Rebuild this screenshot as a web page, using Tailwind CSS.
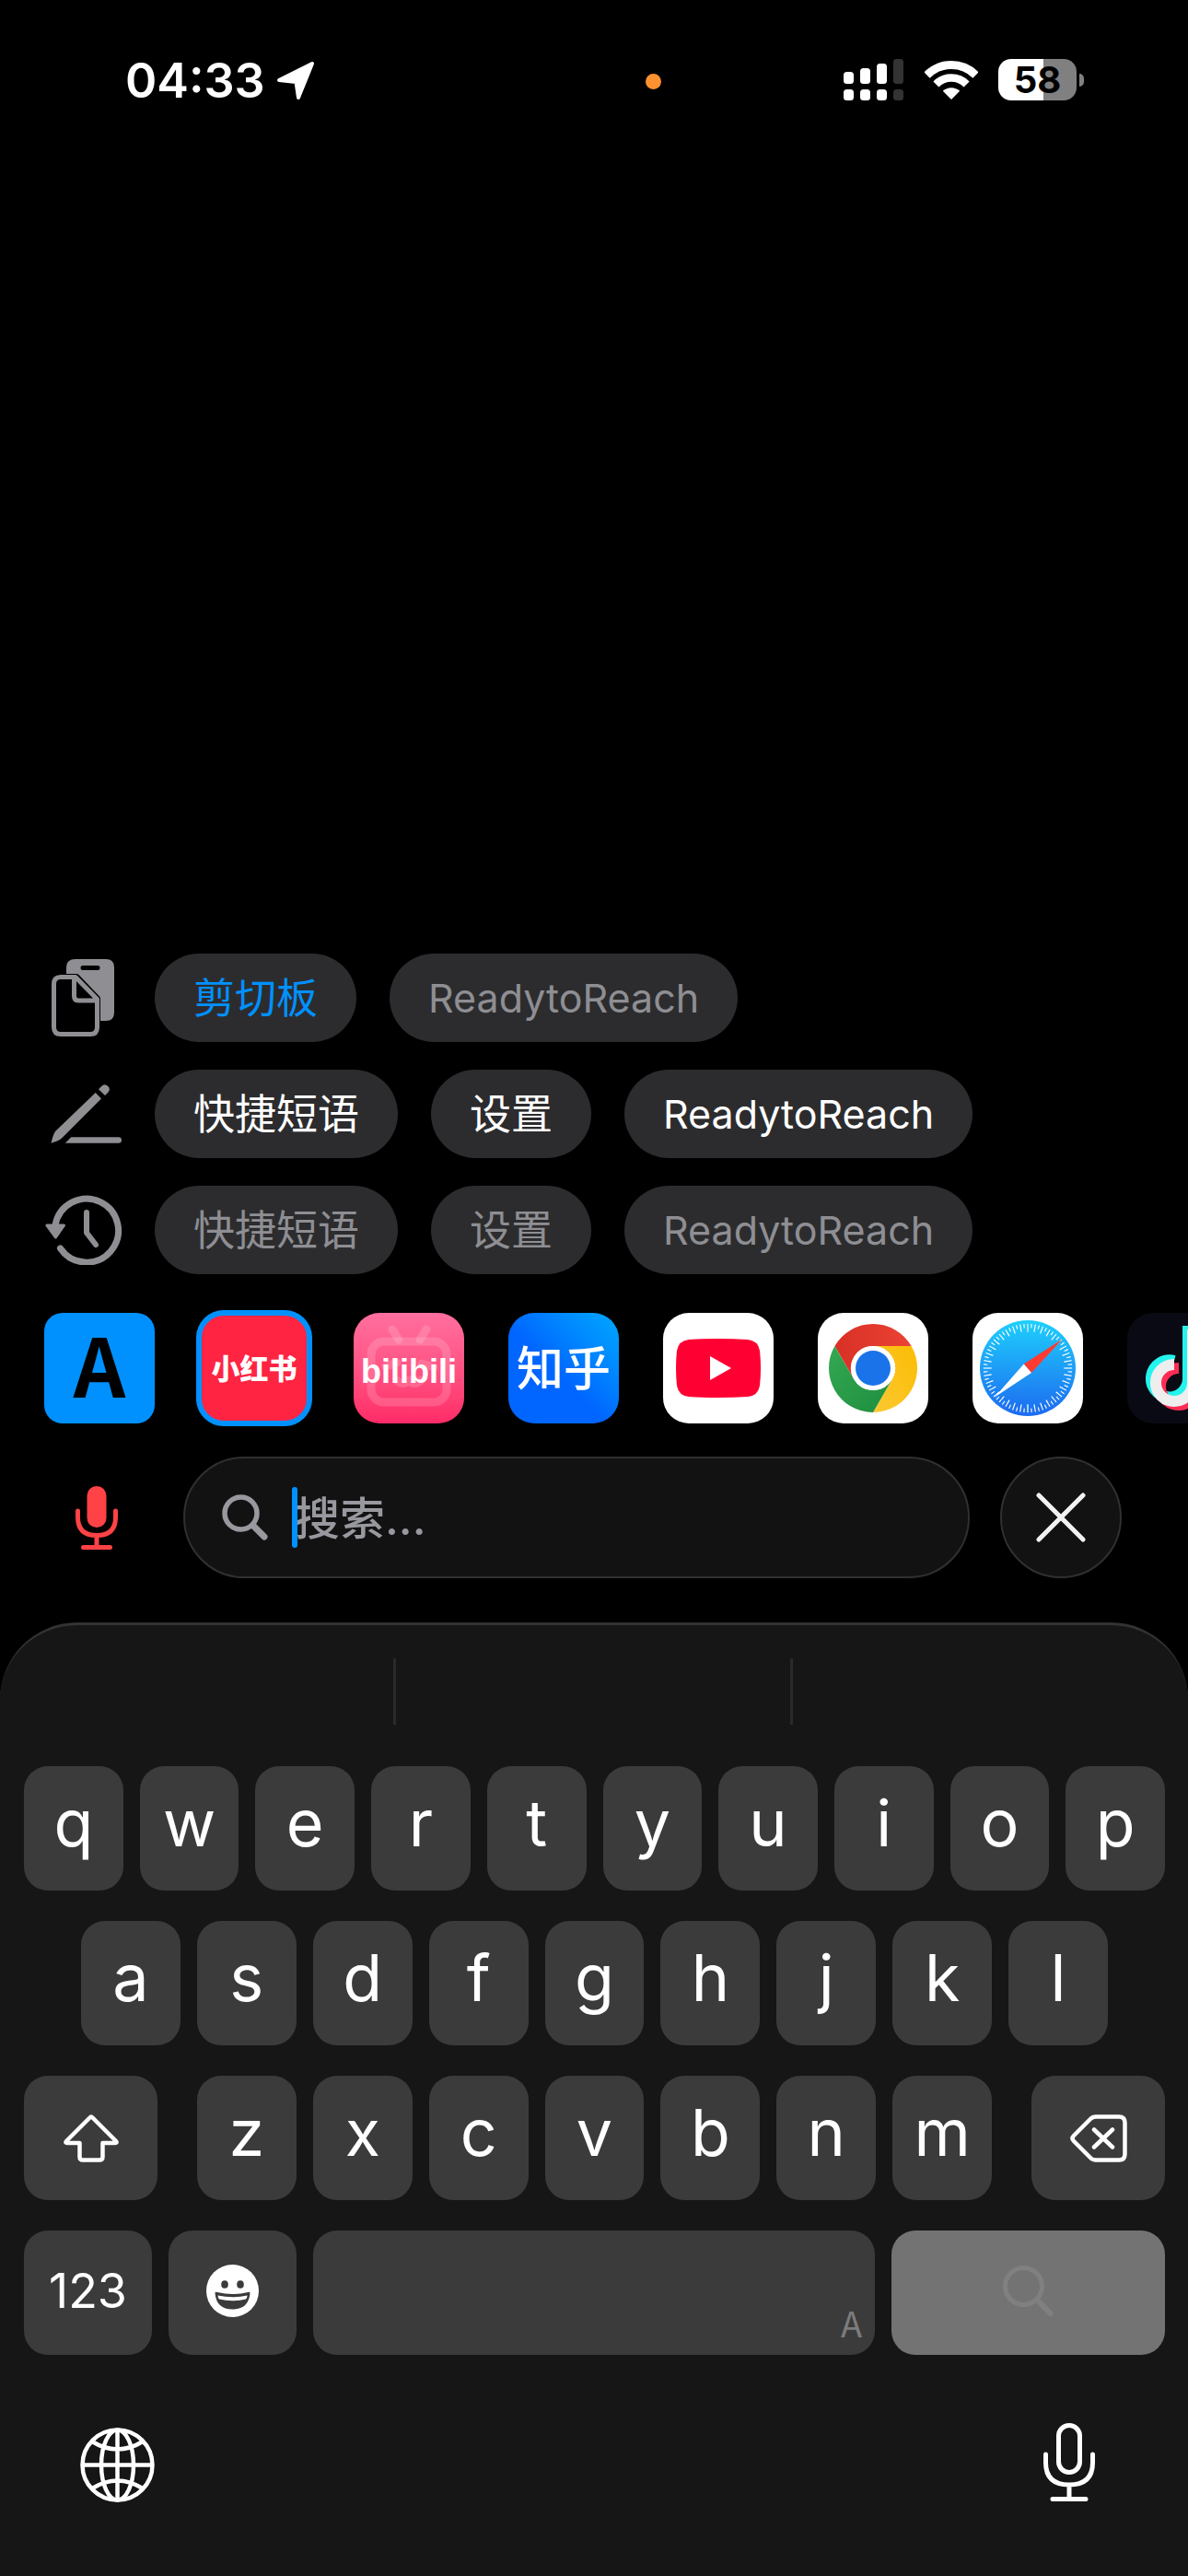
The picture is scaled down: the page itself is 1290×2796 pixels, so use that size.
<!DOCTYPE html>
<html lang="zh-CN">
<head>
<meta charset="utf-8">
<meta name="viewport" content="width=device-width, initial-scale=1">
<title>搜索</title>
<script src="https://cdn.jsdelivr.net/npm/@tailwindcss/browser@4"></script>
</head>
<body class="bg-black text-white font-['Inter','Noto_Sans_CJK_SC',sans-serif]">
<div class="flex min-h-screen flex-col overflow-hidden">

  <!-- Status bar -->
  <header class="flex items-center pt-16 pr-[113px] pl-[136px]">
    <time class="pt-[2px] text-[52px] leading-[41px] font-semibold">04:33</time>
    <svg class="mt-[2px] ml-3 h-[43px] w-[43px]" viewBox="0 0 43 43" fill="#fff" stroke="#fff" stroke-width="4" stroke-linejoin="round"><path d="M3 21 39 3 24 40 21.500 23Z"/></svg>
    <span class="mt-1 mr-[198px] ml-auto size-[17px] rounded-full bg-[#ff9230]"></span>
    <div class="flex items-center">
      <svg class="h-[45px] w-[65px]" viewBox="0 0 65 45" fill="#fff">
        <rect x="0" y="14" width="11" height="13" rx="3.500"/><rect x="18" y="10" width="11" height="17" rx="3.500"/><rect x="36" y="5" width="11" height="22" rx="3.500"/><rect x="54" y="0" width="11" height="27" rx="3.500" fill="#333"/>
        <rect x="0" y="33" width="11" height="12" rx="3.500"/><rect x="18" y="33" width="11" height="12" rx="3.500"/><rect x="36" y="33" width="11" height="12" rx="3.500"/><rect x="54" y="33" width="11" height="12" rx="3.500" fill="#333"/>
      </svg>
      <svg class="ml-[23px] h-[42px] w-[58px]" viewBox="0 0 58 42" fill="none" stroke="#fff"><path stroke-width="9" d="M2.500 15.500A37.500 37.500 0 0 1 55.500 15.500"/><path stroke-width="8.500" d="M12.400 25.400A23.500 23.500 0 0 1 45.600 25.400"/><path fill="#fff" stroke="none" d="M29 42 19.800 32.800A13.700 13.700 0 0 1 38.200 32.800Z"/></svg>
      <div class="ml-[22px] flex h-[45px] w-[85px] items-center justify-center rounded-[14px] bg-linear-to-r from-white from-58% to-[#808080] to-58% text-[40px] leading-none font-bold text-black">58</div>
      <span class="ml-[3px] h-[14px] w-[5px] rounded-r-full bg-[#808080]"></span>
    </div>
  </header>

  <main class="mt-auto flex flex-col">
    <!-- Quick phrase rows -->
    <section class="flex flex-col gap-[30px] text-[45px] leading-none">
      <div class="flex items-center gap-9">
        <div class="flex w-[132px] justify-end pr-2">
          <svg class="h-[84px] w-[68px]" viewBox="0 0 68 84"><path fill="#8e8e93" fill-rule="evenodd" d="M26 0H59Q68 0 68 9V58Q68 67 59 67H25Q16 67 16 58V9Q16 0 26 0ZM34 7Q31.500 7 31.500 9.500T34 12H50Q52.500 12 52.500 9.500T50 7Z"/><g stroke-linejoin="round"><path fill="#000" stroke="#000" stroke-width="7" d="M27 19.500H10Q2.500 19.500 2.500 27V74Q2.500 81.500 10 81.500H42Q49.500 81.500 49.500 74V43Z"/><path fill="none" stroke="#8e8e93" stroke-width="5" d="M26 19.500H10Q2.500 19.500 2.500 27V74Q2.500 81.500 10 81.500H42Q49.500 81.500 49.500 74V43.500ZM24.500 20V40Q24.500 45 29 45H49"/></g></svg>
        </div>
        <button class="h-24 rounded-full bg-[#2c2c2e] px-[42px] text-[#0091ff]">剪切板</button>
        <button class="h-24 rounded-full bg-[#2c2c2e] px-[42px] text-[43px] text-[#8e8e93]">ReadytoReach</button>
      </div>
      <div class="flex items-center gap-9">
        <div class="flex w-[132px] justify-end">
          <svg class="h-[64px] w-[77px]" viewBox="0 0 77 64" fill="#8e8e93"><path d="M.5 63.700 2 58Q3 54 5 51L48.700 9 55 15.500 13 57.500Q10.500 60 7 61.500ZM52 5.300 55.500 1.800Q58.500-1.500 62 1.800T62.500 8.500L59 12ZM15.800 63.700 22.300 57.300H73.500Q77 57.300 77 60.500T73.500 63.700Z"/></svg>
        </div>
        <button class="h-24 rounded-full bg-[#2c2c2e] px-[42px]">快捷短语</button>
        <button class="h-24 rounded-full bg-[#2c2c2e] px-[42px]">设置</button>
        <button class="h-24 rounded-full bg-[#2c2c2e] px-[42px] text-[43px]">ReadytoReach</button>
      </div>
      <div class="flex items-center gap-9 text-[#8e8e93]">
        <div class="flex w-[132px] justify-end">
          <svg class="h-[76px] w-[83px]" viewBox="0 0 83 76" fill="none" stroke="#8e8e93" stroke-width="7" stroke-linecap="round" stroke-linejoin="round"><path d="M11 33A34.500 34.500 0 1 1 16.500 58"/><path stroke-width="6" d="M45 19V41L55 54"/><path fill="#8e8e93" stroke-width="3" d="M2 33H20.500L11.500 46Z"/></svg>
        </div>
        <button class="h-24 rounded-full bg-[#2c2c2e] px-[42px]">快捷短语</button>
        <button class="h-24 rounded-full bg-[#2c2c2e] px-[42px]">设置</button>
        <button class="h-24 rounded-full bg-[#2c2c2e] px-[42px] text-[43px]">ReadytoReach</button>
      </div>
    </section>

    <!-- Search engines -->
    <nav class="mt-[42px] flex h-[120px] items-center gap-12 overflow-visible pl-12 leading-none whitespace-nowrap">
      <a href="#" class="flex size-[120px] shrink-0 items-center justify-center rounded-[20px] bg-[#0091ff] pb-3 font-['Noto_Sans_CJK_SC',sans-serif] text-[88px] font-bold text-black">A</a>
      <a href="#" class="-m-[3px] flex size-[126px] shrink-0 items-center justify-center rounded-[30px] border-6 border-[#0091ff] bg-[#ff2442] text-[31px] font-black">小红书</a>
      <a href="#" aria-label="bilibili" class="grid size-[120px] shrink-0 place-items-center overflow-hidden rounded-[28px] bg-linear-to-b from-[#ff6f9f] to-[#ff2a68]">
        <svg class="size-[120px]" viewBox="0 0 120 120"><g fill="none" stroke="#fff" stroke-opacity=".16" stroke-width="9" stroke-linecap="round" stroke-linejoin="round"><path d="M42 18 49 29M79 18 72 29"/><rect x="19" y="31" width="82" height="66" rx="14"/><path d="M35 58 47 54M74 55 87 59M47 73Q54 80 60 73 66 80 73 73"/></g><text x="60" y="76" text-anchor="middle" fill="#fff" font-family="Liberation Sans, sans-serif" font-size="36" font-weight="700">bilibili</text></svg>
      </a>
      <a href="#" class="flex size-[120px] shrink-0 items-center justify-center rounded-[28px] bg-linear-to-tr from-[#0066ff] from-45% to-[#00a8ff] text-[51px] font-medium">知乎</a>
      <a href="#" aria-label="YouTube" class="size-[120px] shrink-0 rounded-[28px] bg-white">
        <svg class="size-[120px]" viewBox="0 0 120 120"><path fill="#f03" d="M28 29Q60 27 92 29 103 30 105 41 107 60 105 79 103 90 92 91 60 93 28 91 17 90 15 79 13 60 15 41 17 30 28 29Z"/><path fill="#fff" d="M51 47 74 60 51 73Z"/></svg>
      </a>
      <a href="#" aria-label="Chrome" class="size-[120px] shrink-0 rounded-[28px] bg-white">
        <svg class="size-[120px]" viewBox="0 0 120 120">
          <defs><linearGradient id="cr"><stop stop-color="#d93025"/><stop offset="1" stop-color="#ea4335"/></linearGradient><linearGradient id="cy" x1="0" y1="1" x2="1" y2="0"><stop stop-color="#fcc934"/><stop offset="1" stop-color="#fbbc04"/></linearGradient><linearGradient id="cg" x1="1" y1="1" x2="0" y2="0"><stop stop-color="#1e8e3e"/><stop offset="1" stop-color="#34a853"/></linearGradient></defs>
          <path fill="url(#cr)" d="M18.430 36A48 48 0 0 1 101.570 36H60A24 24 0 0 0 39.200 72Z"/><path fill="url(#cy)" d="M101.570 36A48 48 0 0 1 60 108L80.800 72A24 24 0 0 0 60 36Z"/><path fill="url(#cg)" d="M60 108A48 48 0 0 1 18.430 36L39.200 72A24 24 0 0 0 80.800 72Z"/><circle cx="60" cy="60" r="24" fill="#fff"/><circle cx="60" cy="60" r="19" fill="#1a73e8"/></svg>
      </a>
      <a href="#" aria-label="Safari" class="size-[120px] shrink-0 rounded-[28px] bg-white">
        <svg class="size-[120px]" viewBox="0 0 120 120">
          <defs><linearGradient id="sf" x2="0" y2="1"><stop stop-color="#1ed0fc"/><stop offset="1" stop-color="#1d6af0"/></linearGradient></defs>
          <circle cx="60" cy="60" r="52" fill="url(#sf)"/>
          <g fill="none" stroke="#fff"><circle cx="60" cy="60" r="46" stroke-width="4.500" pathLength="72" stroke-dasharray=".28 .72" stroke-dashoffset=".14"/><circle cx="60" cy="60" r="42" stroke-width="4" pathLength="36" stroke-dasharray=".16 .84" stroke-dashoffset=".08"/></g>
          <path fill="#9edcff" fill-opacity=".75" d="M59 12h2v9h-2zM59 99h2v9h-2zM12 59v2h9v-2zM99 59v2h9v-2z"/>
          <path fill="#ff3b30" d="M97.500 28.500 55.700 55.500 64 65Z"/><path fill="#fff" d="M24 91.500 55.700 55.500 64 65Z"/></svg>
      </a>
      <a href="#" aria-label="抖音" class="size-[120px] shrink-0 rounded-[28px] bg-[#0a0a14]">
        <svg class="size-[120px]" viewBox="0 0 120 120" fill="none" stroke-width="12"><path stroke="#25f4ee" d="M51 52A20 20 0 1 0 66 72V14"/><path stroke="#fe2c55" d="M56 60A20 20 0 1 0 76 80V22Q80 38 96 40"/><path stroke="#eee" d="M51 56A20 20 0 1 0 71 76V18Q75 34 92 36"/></svg>
      </a>
    </nav>

    <!-- Search field -->
    <form class="mt-9 flex items-center pr-[72px] pl-[82px]">
      <button type="button" aria-label="语音" class="mr-[71px]">
        <svg class="h-[69px] w-[46px]" viewBox="0 0 46 69" fill="none" stroke="#ff4245" stroke-width="5" stroke-linecap="round"><rect x="12.500" y="0" width="21" height="45" rx="10.500" fill="#ff4245" stroke="none"/><path d="M2.500 27V34Q2.500 53.500 23 53.500T43.500 34V27M23 54V66M8.500 66.500H37.500"/></svg>
      </button>
      <label class="relative flex h-[132px] min-w-0 flex-1 items-center rounded-full border-2 border-[#303030] bg-[#121212] pl-10">
        <svg class="h-[50px] w-[50px] shrink-0" viewBox="0 0 50 50" fill="none" stroke="#98989f" stroke-linecap="round"><circle cx="20.500" cy="20.500" r="17.500" stroke-width="5.500"/><path stroke-width="7" d="M34 34 46 46"/></svg>
        <input type="text" aria-label="搜索" placeholder="搜索..." class="ml-[29px] min-w-0 flex-1 bg-transparent pt-1 text-[49px] leading-[66px] font-medium outline-none placeholder:text-[#98989f]">
        <span class="absolute left-[116px] h-[66px] w-[6px] rounded-full bg-[#0091ff]"></span>
      </label>
      <button type="button" aria-label="关闭" class="ml-[33px] flex size-[132px] items-center justify-center rounded-full border-2 border-[#303030] bg-[#121212]">
        <svg class="size-[54px]" viewBox="0 0 54 54" stroke="#f2f2f2" stroke-width="5" stroke-linecap="round"><path d="M3 3 51 51M51 3 3 51"/></svg>
      </button>
    </form>

    <!-- Keyboard -->
    <section class="mt-12 rounded-t-[84px] border-t-3 border-[#333] bg-[#161616] pr-[25px] pl-[26px] text-[70px] leading-none">
      <div class="grid grid-cols-3 pt-9 pb-[45px]">
        <span class="h-[72px]"></span>
        <span class="-mr-[9px] -ml-3 h-[72px] border-x-3 border-[#2a2a2a]"></span>
        <span class="h-[72px]"></span>
      </div>
      <div class="flex flex-col gap-[33px]">
        <div class="flex gap-[18px]">
          <button class="h-[135px] flex-1 rounded-[26px] bg-[#3b3b3b] pb-3">q</button>
          <button class="h-[135px] flex-1 rounded-[26px] bg-[#3b3b3b] pb-3">w</button>
          <button class="h-[135px] flex-1 rounded-[26px] bg-[#3b3b3b] pb-3">e</button>
          <button class="h-[135px] flex-1 rounded-[26px] bg-[#3b3b3b] pb-3">r</button>
          <button class="h-[135px] flex-1 rounded-[26px] bg-[#3b3b3b] pb-3">t</button>
          <button class="h-[135px] flex-1 rounded-[26px] bg-[#3b3b3b] pb-3">y</button>
          <button class="h-[135px] flex-1 rounded-[26px] bg-[#3b3b3b] pb-3">u</button>
          <button class="h-[135px] flex-1 rounded-[26px] bg-[#3b3b3b] pb-3">i</button>
          <button class="h-[135px] flex-1 rounded-[26px] bg-[#3b3b3b] pb-3">o</button>
          <button class="h-[135px] flex-1 rounded-[26px] bg-[#3b3b3b] pb-3">p</button>
        </div>
        <div class="flex gap-[18px] px-[62px]">
          <button class="h-[135px] flex-1 rounded-[26px] bg-[#3b3b3b] pb-3">a</button>
          <button class="h-[135px] flex-1 rounded-[26px] bg-[#3b3b3b] pb-3">s</button>
          <button class="h-[135px] flex-1 rounded-[26px] bg-[#3b3b3b] pb-3">d</button>
          <button class="h-[135px] flex-1 rounded-[26px] bg-[#3b3b3b] pb-3">f</button>
          <button class="h-[135px] flex-1 rounded-[26px] bg-[#3b3b3b] pb-3">g</button>
          <button class="h-[135px] flex-1 rounded-[26px] bg-[#3b3b3b] pb-3">h</button>
          <button class="h-[135px] flex-1 rounded-[26px] bg-[#3b3b3b] pb-3">j</button>
          <button class="h-[135px] flex-1 rounded-[26px] bg-[#3b3b3b] pb-3">k</button>
          <button class="h-[135px] flex-1 rounded-[26px] bg-[#3b3b3b] pb-3">l</button>
        </div>
        <div class="flex gap-[43px]">
          <button aria-label="Shift" class="flex h-[135px] w-[145px] items-center justify-center rounded-[26px] bg-[#3b3b3b]">
            <svg class="h-[52px] w-[60px]" viewBox="0 0 60 52" fill="none" stroke="#fff" stroke-width="4.500" stroke-linejoin="round"><path d="M28.500 3.500Q30 2 31.500 3.500L57 29Q58.500 31 56 31H42.500V46Q42.500 49.500 39 49.500H21Q17.500 49.500 17.500 46V31H4Q1.500 31 3 29Z"/></svg>
          </button>
          <div class="flex flex-1 gap-[18px]">
            <button class="h-[135px] flex-1 rounded-[26px] bg-[#3b3b3b] pb-3">z</button>
            <button class="h-[135px] flex-1 rounded-[26px] bg-[#3b3b3b] pb-3">x</button>
            <button class="h-[135px] flex-1 rounded-[26px] bg-[#3b3b3b] pb-3">c</button>
            <button class="h-[135px] flex-1 rounded-[26px] bg-[#3b3b3b] pb-3">v</button>
            <button class="h-[135px] flex-1 rounded-[26px] bg-[#3b3b3b] pb-3">b</button>
            <button class="h-[135px] flex-1 rounded-[26px] bg-[#3b3b3b] pb-3">n</button>
            <button class="h-[135px] flex-1 rounded-[26px] bg-[#3b3b3b] pb-3">m</button>
          </div>
          <button aria-label="删除" class="flex h-[135px] w-[145px] items-center justify-center rounded-[26px] bg-[#3b3b3b]">
            <svg class="h-[52px] w-[62px]" viewBox="0 0 62 52" fill="none" stroke="#fff" stroke-width="4.500" stroke-linecap="round" stroke-linejoin="round"><path d="M28 2.500H53Q59.500 2.500 59.500 9V43Q59.500 49.500 53 49.500H28Q24.500 49.500 22 47L4 29Q1 26 4 23L22 5Q24.500 2.500 28 2.500ZM26 16.500 46 35.500M46 16.500 26 35.500"/></svg>
          </button>
        </div>
        <div class="flex gap-[18px]">
          <button class="h-[135px] w-[139px] rounded-[26px] bg-[#3b3b3b] pb-1 text-[52px]">123</button>
          <button aria-label="表情" class="flex h-[135px] w-[139px] items-center justify-center rounded-[26px] bg-[#3b3b3b] pb-1">
            <svg class="size-[57px]" viewBox="0 0 57 57"><circle cx="28.500" cy="28.500" r="28.500" fill="#fff"/><g fill="#3b3b3b"><ellipse cx="20" cy="21.500" rx="3.800" ry="4.300"/><ellipse cx="37" cy="21.500" rx="3.800" ry="4.300"/><path d="M9.500 31Q9.500 29 12 30 28.500 34 45 30 47.500 29 47.500 31 46 48.500 28.500 48.500T9.500 31Z"/></g><path fill="#fff" d="M12.500 33.500Q28.500 37 44.500 33.500 44.500 36 43 37.500 28.500 41 14 37.500 12.500 36 12.500 33.500Z"/></svg>
          </button>
          <button aria-label="空格" class="flex h-[135px] flex-1 items-end justify-end rounded-[26px] bg-[#3b3b3b] pr-[14px] pb-4 font-['Noto_Sans_CJK_SC',sans-serif] text-[38px] text-[#7c7c7c]">A</button>
          <button aria-label="搜索" class="flex h-[135px] w-[297px] items-center justify-center rounded-[26px] bg-[#737373] pb-1">
            <svg class="size-[55px]" viewBox="0 0 55 55" fill="none" stroke="#808080" stroke-linecap="round"><circle cx="22.500" cy="22.500" r="20" stroke-width="5"/><path stroke-width="6" d="M37 37 51.500 52"/></svg>
          </button>
        </div>
      </div>
      <div class="flex items-center justify-between px-[61px] pt-[74px] pb-20">
        <button aria-label="切换键盘">
          <svg class="mt-1 size-[81px]" viewBox="0 0 81 81" fill="none" stroke="#fff" stroke-width="4.500"><circle cx="40.500" cy="40.500" r="38"/><ellipse cx="40.500" cy="40.500" rx="17.500" ry="38"/><path d="M40.500 2V79M2 40.500H79M13 15Q40.500 32 68 15M13 66Q40.500 49 68 66"/></svg>
        </button>
        <button aria-label="听写" class="mr-[14px]">
          <svg class="h-[86px] w-[57px]" viewBox="0 0 57 86" fill="none" stroke="#fff" stroke-width="5" stroke-linecap="round"><rect x="16.500" y="2.500" width="23" height="51" rx="11.500"/><path d="M2.500 34V43Q2.500 67 28 67T53.500 43V34M28 67V81M10 82.500H46"/></svg>
        </button>
      </div>
    </section>
  </main>
</div>
</body>
</html>
